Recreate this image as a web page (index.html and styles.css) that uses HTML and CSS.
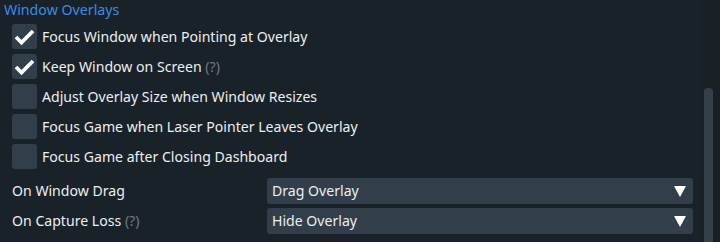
FILE: index.html
```html
<!DOCTYPE html>
<html lang="en">
<head>
    <meta charset="UTF-8">
    <title>Window Overlays</title>
    <link rel="stylesheet" href="styles.css">
</head>
<body>
    <div class="panel">
        <div class="content">
            <div class="section-title">Window Overlays</div>

            <div class="checkbox-list">
                <label class="checkbox-row">
                    <span class="checkbox checked">
                        <svg viewBox="0 0 25 25" width="25" height="25"><path d="M4 13 L9.5 18.5 L21 7" fill="none" stroke="#fff" stroke-width="3.8"/></svg>
                    </span>
                    <span class="checkbox-text">Focus Window when Pointing at Overlay</span>
                </label>
                <label class="checkbox-row">
                    <span class="checkbox checked">
                        <svg viewBox="0 0 25 25" width="25" height="25"><path d="M4 13 L9.5 18.5 L21 7" fill="none" stroke="#fff" stroke-width="3.8"/></svg>
                    </span>
                    <span class="checkbox-text">Keep Window on Screen <span class="help">(?)</span></span>
                </label>
                <label class="checkbox-row">
                    <span class="checkbox"></span>
                    <span class="checkbox-text">Adjust Overlay Size when Window Resizes</span>
                </label>
                <label class="checkbox-row">
                    <span class="checkbox"></span>
                    <span class="checkbox-text">Focus Game when Laser Pointer Leaves Overlay</span>
                </label>
                <label class="checkbox-row">
                    <span class="checkbox"></span>
                    <span class="checkbox-text">Focus Game after Closing Dashboard</span>
                </label>
            </div>

            <div class="combo-list">
                <div class="combo-row">
                    <span class="combo-label">On Window Drag</span>
                    <div class="combo">
                        <span class="combo-value">Drag Overlay</span>
                        <span class="combo-arrow"></span>
                    </div>
                </div>
                <div class="combo-row">
                    <span class="combo-label">On Capture Loss <span class="help">(?)</span></span>
                    <div class="combo">
                        <span class="combo-value">Hide Overlay</span>
                        <span class="combo-arrow"></span>
                    </div>
                </div>
            </div>
        </div>

        <div class="scrollbar">
            <div class="scroll-thumb"></div>
        </div>
    </div>
</body>
</html>
```

FILE: styles.css
```css
html, body {
    margin: 0;
    padding: 0;
    height: 100%;
}

body {
    background-color: #1a2229;
    color: #eceef0;
    font-family: "Noto Sans", "DejaVu Sans", sans-serif;
    font-size: 14.1px;
    line-height: 20px;
    overflow: hidden;
}

.panel {
    display: flex;
    height: 242px;
}

.content {
    flex: 1;
    padding: 0 8px 0 4px;
}

.section-title {
    color: #3b8be4;
    font-size: 14.2px;
    height: 20px;
    margin-bottom: 4px;
}

.checkbox-list {
    display: flex;
    flex-direction: column;
    gap: 5px;
    padding-left: 8px;
}

.checkbox-row {
    display: flex;
    align-items: center;
    gap: 5px;
    height: 25px;
    white-space: nowrap;
}

.checkbox {
    width: 25px;
    height: 25px;
    border-radius: 3px;
    background-color: #323e49;
    flex-shrink: 0;
}

.checkbox svg {
    display: block;
}

.help {
    color: #6f7880;
}

.combo-list {
    display: flex;
    flex-direction: column;
    gap: 4px;
    margin-top: 9px;
    padding-left: 8px;
}

.combo-row {
    display: flex;
    align-items: center;
    height: 26px;
}

.combo-label {
    width: 255px;
    flex-shrink: 0;
    white-space: nowrap;
}

.combo {
    flex: 1;
    height: 26px;
    display: flex;
    align-items: center;
    justify-content: space-between;
    background-color: #323e49;
    border-radius: 3px;
    padding: 0 7px 0 5px;
}

.combo-arrow {
    width: 0;
    height: 0;
    border-left: 6.5px solid transparent;
    border-right: 6.5px solid transparent;
    border-top: 11px solid #ffffff;
}

.scrollbar {
    width: 19px;
    background-color: #182026;
}

.scroll-thumb {
    margin: 88px 0 0 3px;
    width: 9px;
    height: 160px;
    border-radius: 4px;
    background-color: #343f49;
}
```
